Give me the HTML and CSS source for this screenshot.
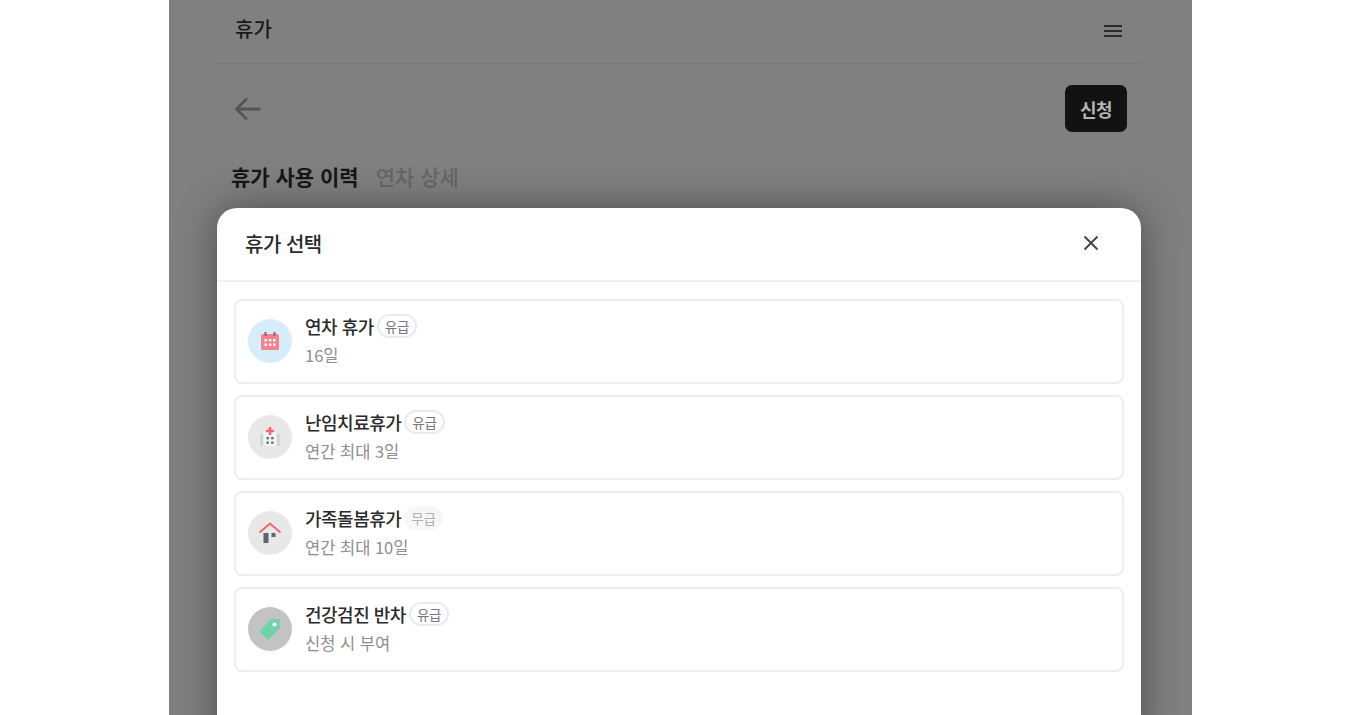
FILE: index.html
```html
<!DOCTYPE html>
<html lang="ko">
<head>
<meta charset="utf-8">
<title>휴가</title>
<link rel="stylesheet" href="styles.css">
</head>
<body>
<div class="app">
  <div class="page">
    <header class="topbar">
      <span class="topbar-title">휴가</span>
      <svg class="menu-icon" width="20" height="14" viewBox="0 0 20 14"><path d="M1 2h18M1 7h18M1 12h18" fill="none" stroke="#2a2a2a" stroke-width="2"/></svg>
    </header>
    <div class="actions">
      <svg class="back-icon" width="28" height="26" viewBox="0 0 28 26"><path d="M26.500 13H3M13 2.500 2.500 13 13 23.500" fill="none" stroke="#555" stroke-width="2.800"/></svg>
      <button class="apply">신청</button>
    </div>
    <nav class="tabs">
      <span class="tab active">휴가 사용 이력</span>
      <span class="tab">연차 상세</span>
    </nav>
  </div>
  <section class="modal">
    <div class="modal-head">
      <h2 class="modal-title">휴가 선택</h2>
      <svg width="16" height="16" viewBox="0 0 16 16"><path d="M1.500 1.500l13 13M14.500 1.500l-13 13" fill="none" stroke="#444" stroke-width="1.900"/></svg>
    </div>
    <div class="list">
      <div class="card">
        <div class="avatar avatar-blue">
          <svg width="20" height="20" viewBox="0 0 20 20"><rect x="1" y="3" width="18" height="16" rx="1.500" fill="#f8808a"/><rect x="4.500" y="1" width="2" height="4" fill="#7b6a70"/><rect x="13.500" y="1" width="2" height="4" fill="#7b6a70"/><g fill="#fff"><rect x="4.500" y="8" width="2.500" height="2.500"/><rect x="8.800" y="8" width="2.500" height="2.500"/><rect x="13" y="8" width="2.500" height="2.500"/><rect x="4.500" y="12.500" width="2.500" height="2.500"/><rect x="8.800" y="12.500" width="2.500" height="2.500"/><rect x="13" y="12.500" width="2.500" height="2.500"/></g></svg>
        </div>
        <div class="info">
          <div class="name-row"><span class="name">연차 휴가</span><span class="badge">유급</span></div>
          <div class="desc">16일</div>
        </div>
      </div>
      <div class="card">
        <div class="avatar avatar-grey">
          <svg width="20" height="20" viewBox="0 0 20 20"><rect x="0.500" y="7" width="2" height="12" fill="#c5ced8"/><rect x="17.500" y="7" width="2" height="12" fill="#c5ced8"/><rect x="4" y="5" width="12" height="14" fill="#f2f3f5"/><path d="M8.700 0h2.600v2.700H14v2.600h-2.700V8H8.700V5.300H6V2.700h2.700z" fill="#f4656c"/><g fill="#5d6570"><rect x="6.500" y="10" width="2.300" height="2.300"/><rect x="11.200" y="10" width="2.300" height="2.300"/><rect x="6.500" y="14.500" width="2.300" height="2.300"/><rect x="11.200" y="14.500" width="2.300" height="2.300"/></g></svg>
        </div>
        <div class="info">
          <div class="name-row"><span class="name">난임치료휴가</span><span class="badge">유급</span></div>
          <div class="desc">연간 최대 3일</div>
        </div>
      </div>
      <div class="card">
        <div class="avatar avatar-grey">
          <svg width="24" height="22" viewBox="0 0 24 22"><path d="M1.500 10.500 12 1.500l10.500 9" fill="none" stroke="#f4656c" stroke-width="2"/><rect x="5.500" y="11" width="5" height="10" fill="#5d6570"/><rect x="13.500" y="11" width="4" height="4" fill="#5d6570"/></svg>
        </div>
        <div class="info">
          <div class="name-row"><span class="name">가족돌봄휴가</span><span class="badge badge-muted">무급</span></div>
          <div class="desc">연간 최대 10일</div>
        </div>
      </div>
      <div class="card">
        <div class="avatar avatar-dark">
          <svg width="22" height="22" viewBox="0 0 22 22"><path d="M12 1.500h8.500V10L9 21.500 1 13z" fill="#6fd3a8" stroke="#6fd3a8" stroke-linejoin="round"/><circle cx="15.500" cy="6.500" r="2" fill="#fff"/></svg>
        </div>
        <div class="info">
          <div class="name-row"><span class="name">건강검진 반차</span><span class="badge">유급</span></div>
          <div class="desc">신청 시 부여</div>
        </div>
      </div>
    </div>
  </section>
</div>
</body>
</html>
```
FILE: styles.css
```css
* { box-sizing: border-box; }
html, body { margin: 0; height: 100%; }
body {
  background: #fff;
  overflow: hidden;
  font-family: "Noto Sans CJK KR", "Noto Sans", sans-serif;
  color: #1c1c1c;
}
.app {
  position: relative;
  width: 1023px;
  height: 715px;
  margin-left: 169px;
  background: #808080;
  overflow: hidden;
}
.page { width: 924px; margin-left: 48px; }
.topbar {
  height: 64px;
  padding: 0 18px 7px 18px;
  display: flex;
  align-items: center;
  justify-content: space-between;
  border-bottom: 1px solid #767676;
}
.topbar-title { font-size: 20px; font-weight: 500; color: #1a1a1a; }
.menu-icon { margin-top: 6px; }
.actions {
  display: flex;
  align-items: center;
  justify-content: space-between;
  padding: 21px 14px 0 17px;
}
.apply {
  width: 62px;
  height: 47px;
  border: 0;
  border-radius: 7px;
  background: #121212;
  color: #b4b4b4;
  font: 700 18px "Noto Sans CJK KR", sans-serif;
  letter-spacing: -.5px;
}
.tabs { display: flex; gap: 17px; padding: 26px 0 0 14px; }
.tab { font-size: 21px; font-weight: 500; line-height: 36px; color: #666; }
.tab.active { font-weight: 700; color: #161616; }
.modal {
  position: absolute;
  left: 48px;
  top: 208px;
  width: 924px;
  height: 540px;
  background: #fff;
  border-radius: 20px 20px 0 0;
  box-shadow: 0 0 40px rgba(0, 0, 0, .4);
}
.modal-head {
  height: 74px;
  padding: 0 42px 2px 28px;
  display: flex;
  align-items: center;
  justify-content: space-between;
  border-bottom: 2px solid #f1f1f3;
}
.modal-title { margin: 0; font-size: 20px; font-weight: 500; letter-spacing: -.5px; color: #2a2a2a; }
.list { display: flex; flex-direction: column; gap: 11px; padding: 17px 17px 0; }
.card {
  height: 85px;
  display: flex;
  align-items: center;
  gap: 13px;
  padding: 0 12px 2px;
  border: 2px solid #eeeef0;
  border-radius: 8px;
}
.avatar {
  width: 44px;
  height: 44px;
  border-radius: 50%;
  display: flex;
  align-items: center;
  justify-content: center;
  flex: none;
}
.avatar-blue { background: #d6edfb; }
.avatar-grey { background: #e8e8e8; }
.avatar-dark { background: #c3c3c3; }
.info { display: flex; flex-direction: column; gap: 5px; }
.name-row { display: flex; align-items: center; gap: 3px; height: 24px; }
.name { font-size: 18px; font-weight: 500; letter-spacing: -.5px; color: #2a2a2a; }
.badge {
  height: 24px;
  padding: 0 6px;
  border: 2px solid #e9ebf0;
  border-radius: 12px;
  font-size: 13.500px;
  line-height: 20px;
  letter-spacing: -.3px;
  color: #777;
}
.badge-muted { padding: 0 5px; background: #f7f7f7; border-color: #f7f7f7; color: #b0b0b0; }
.desc { font-size: 16.500px; line-height: 24px; color: #8d8d8d; }
```
